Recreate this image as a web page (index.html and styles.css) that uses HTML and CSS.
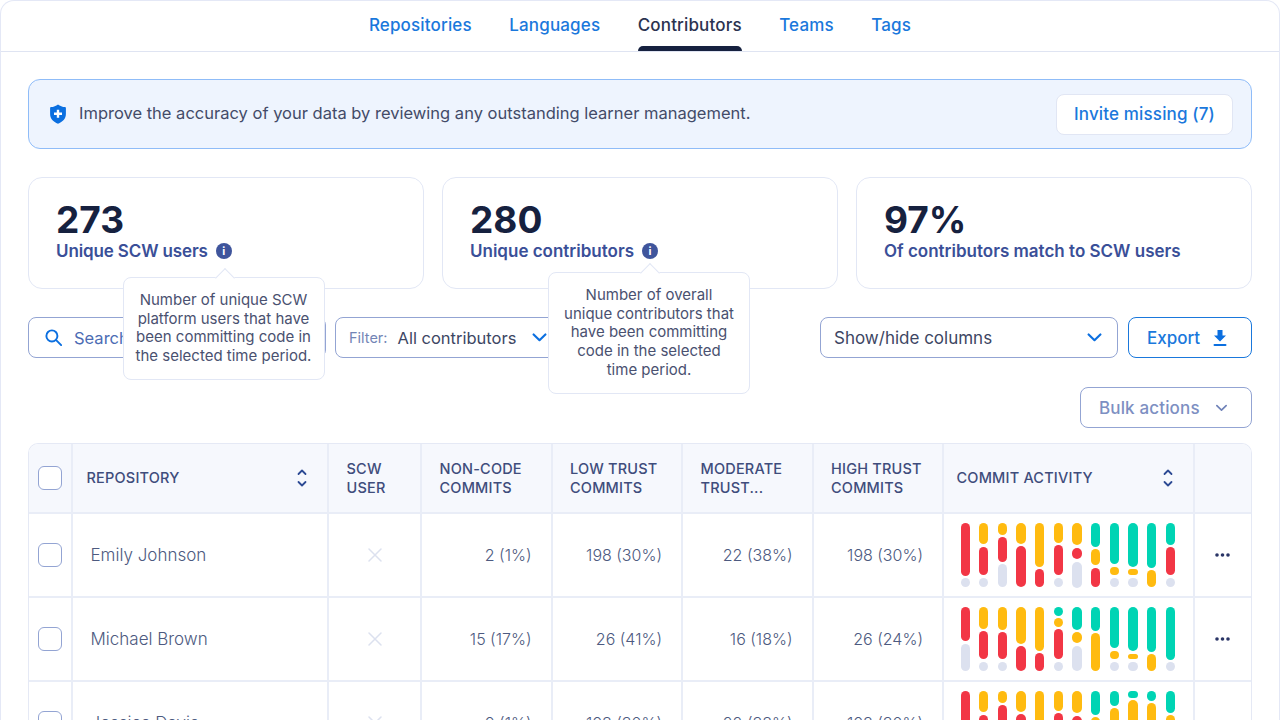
FILE: index.html
```html
<!DOCTYPE html>
<html lang="en">
<head>
<meta charset="utf-8">
<title>Contributors</title>
<link rel="stylesheet" href="styles.css">
</head>
<body>
<div class="page">
  <nav class="tabs">
    <a class="tab">Repositories</a>
    <a class="tab">Languages</a>
    <a class="tab active">Contributors</a>
    <a class="tab">Teams</a>
    <a class="tab">Tags</a>
  </nav>
  <main class="content">
    <section class="banner">
      <svg class="shield" viewBox="0 0 16 20"><path fill="#0b6fe0" d="M8 .4C10 1.900 12.500 2.900 15 3.100c.5 0 .9.400.9.900v6c0 4.600-3.200 8-7.900 9.700C3.300 18 .1 14.600.1 10V4c0-.5.4-.9.9-.9C3.500 2.900 6 1.900 8 .4z"/><path fill="#fff" d="M6.800 5.800h2.400v2.800H12V11H9.200v2.800H6.800V11H4V8.600h2.800z"/></svg>
      <p class="banner-text">Improve the accuracy of your data by reviewing any outstanding learner management.</p>
      <button class="invite">Invite missing (7)</button>
    </section>

    <section class="stats">
      <div class="stat">
        <div class="stat-num">273</div>
        <div class="stat-label">Unique SCW users <span class="info">i</span></div>
        <div class="tip tip-a">Number of unique SCW<br>platform users that have<br>been committing code in<br>the selected time period.</div>
      </div>
      <div class="stat">
        <div class="stat-num">280</div>
        <div class="stat-label">Unique contributors <span class="info">i</span></div>
        <div class="tip tip-b">Number of overall<br>unique contributors that<br>have been committing<br>code in the selected<br>time period.</div>
      </div>
      <div class="stat">
        <div class="stat-num">97%</div>
        <div class="stat-label">Of contributors match to SCW users</div>
      </div>
    </section>

    <section class="toolbar">
      <div class="field search">
        <svg class="ico-search" viewBox="0 0 16 16"><circle cx="6.500" cy="6.500" r="5.200" fill="none" stroke="#0b6fe0" stroke-width="1.800"/><path d="M10.500 10.500 15.200 15.200" stroke="#0b6fe0" stroke-width="1.800" stroke-linecap="round"/></svg>
        <span class="placeholder">Search</span>
      </div>
      <div class="field filter">
        <span class="filter-key">Filter:</span>
        <span class="filter-val">All contributors</span>
        <svg class="chev" viewBox="0 0 14 8"><path d="M1.500 1.200 7 6.500 12.500 1.200" fill="none" stroke="#0b6fe0" stroke-width="2" stroke-linecap="round" stroke-linejoin="round"/></svg>
      </div>
      <div class="spacer"></div>
      <div class="field columns">
        <span class="columns-text">Show/hide columns</span>
        <svg class="chev" viewBox="0 0 14 8"><path d="M1.500 1.200 7 6.500 12.500 1.200" fill="none" stroke="#0b6fe0" stroke-width="2" stroke-linecap="round" stroke-linejoin="round"/></svg>
      </div>
      <button class="export">Export
        <svg class="ico-dl" viewBox="0 0 14 16"><path fill="#0b6fe0" d="M4.500 0h5v5.500H13L7 11.500 1 5.500h3.500z"/><rect x="0.500" y="14" width="13" height="2" rx="1" fill="#0b6fe0"/></svg>
      </button>
    </section>

    <div class="bulk-row">
      <button class="bulk">Bulk actions
        <svg class="chev-sm" viewBox="0 0 14 8"><path d="M2 1.500 7 6.300 12 1.500" fill="none" stroke="#6f82b8" stroke-width="1.800" stroke-linecap="round" stroke-linejoin="round"/></svg>
      </button>
    </div>

    <div class="table-wrap">
      <table class="grid">
        <colgroup>
          <col class="c-check"><col class="c-repo"><col class="c-user"><col class="c-num"><col class="c-num"><col class="c-num"><col class="c-num"><col class="c-act"><col class="c-more">
        </colgroup>
        <thead>
          <tr>
            <th class="check-cell"><span class="box"></span></th>
            <th><div class="th-sort"><span>Repository</span><svg class="sort" viewBox="0 0 10 18"><path d="M1.500 5 5 1.500 8.500 5M1.500 13 5 16.500 8.500 13" fill="none" stroke="#2d4a94" stroke-width="1.800" stroke-linecap="round" stroke-linejoin="round"/></svg></div></th>
            <th>SCW<br>user</th>
            <th>Non-code<br>commits</th>
            <th>Low trust<br>commits</th>
            <th>Moderate<br>trust...</th>
            <th>High trust<br>commits</th>
            <th><div class="th-sort"><span>Commit activity</span><svg class="sort" viewBox="0 0 10 18"><path d="M1.500 5 5 1.500 8.500 5M1.500 13 5 16.500 8.500 13" fill="none" stroke="#2d4a94" stroke-width="1.800" stroke-linecap="round" stroke-linejoin="round"/></svg></div></th>
            <th class="last"></th>
          </tr>
        </thead>
        <tbody id="rows"></tbody>
      </table>
    </div>
  </main>
</div>
<script src="app.js"></script>
</body>
</html>
```
FILE: styles.css
```css
* { box-sizing: border-box; }
html, body { margin: 0; padding: 0; height: 100%; overflow: hidden; background: #fff; }
body { font-family: Inter, "Liberation Sans", sans-serif; color: #3d4663; }
button { font-family: inherit; cursor: pointer; }
p { margin: 0; }

.page { width: 1280px; height: 720px; border: 1.500px solid #e4e8f6; border-bottom: 0; border-radius: 14px 14px 0 0; overflow: hidden; }

.tabs { height: 51px; display: flex; justify-content: center; align-items: flex-start; gap: 37.500px; border-bottom: 1px solid #dfe4f2; }
.tab { position: relative; height: 50px; padding-top: 13px; font-size: 17px; letter-spacing: 0.150px; font-weight: 500; line-height: 22px; color: #1a78dc; }
.tab.active { color: #2b3350; }
.tab.active::after { content: ""; position: absolute; left: 0; right: 0; bottom: 0; height: 5px; background: #16213f; border-radius: 5px 5px 0 0; }

.content { padding: 27px 27px 0; }

.banner { height: 70px; display: flex; align-items: center; padding: 0 18px 0 21px; background: #eef4fe; border: 1px solid #8fbcf8; border-radius: 12px; }
.shield { width: 16px; height: 20px; flex: none; margin-right: 13px; }
.banner-text { flex: 1; font-size: 16.500px; margin-top: -2px; color: #434b68; }
.invite { width: 177px; height: 41px; background: #fff; border: 1px solid #e1e6f4; border-radius: 8px; font-size: 17px; letter-spacing: 0.150px; font-weight: 500; color: #1a78dc; }

.stats { display: flex; gap: 18px; margin-top: 28px; }
.stat { position: relative; flex: 1; height: 111.500px; padding: 23px 27px 0; border: 1px solid #e2e7f5; border-radius: 14px; }
.stat-num { font-size: 37px; line-height: 38px; font-weight: 700; color: #16213f; }
.stat-label { display: flex; align-items: center; gap: 8px; height: 24px; font-size: 17px; font-weight: 600; color: #3a4f98; }
.stat:first-child .stat-label { letter-spacing: -0.130px; }
.info { width: 16px; height: 16px; border-radius: 50%; background: #3f559c; color: #fff; font-size: 11px; font-weight: 700; line-height: 16px; text-align: center; }

.tip { position: absolute; z-index: 3; width: 202px; background: #fff; border: 1px solid #e2e7f5; border-radius: 8px; padding: 13px 0; font-size: 15px; line-height: 18.700px; text-align: center; color: #4a5170; }
.tip::before { content: ""; position: absolute; top: -7px; left: 94px; width: 13px; height: 13px; background: #fff; border-left: 1px solid #e2e7f5; border-top: 1px solid #e2e7f5; transform: rotate(45deg); }
.tip-a { left: 93.500px; top: 99px; }
.tip-b { left: 105px; top: 94px; }

.toolbar { display: flex; align-items: stretch; margin-top: 28.500px; height: 41px; }
.field { display: flex; align-items: center; background: #fff; border: 1.500px solid #93a4d3; border-radius: 8px; }
.search { width: 298px; padding-left: 16px; }
.ico-search { width: 17px; height: 17px; flex: none; }
.placeholder { margin-left: 12px; font-size: 16.500px; color: #4c6cb4; }
.filter { width: 227px; margin-left: 9px; padding-left: 13px; }
.filter-key { font-size: 14.500px; color: #7385b6; margin-right: 10px; }
.filter-val { font-size: 16.500px; color: #3d4663; }
.chev { width: 15px; height: 9px; margin-left: 16px; flex: none; }
.spacer { flex: 1; }
.columns { width: 298px; padding: 0 15px 0 13px; justify-content: space-between; }
.columns-text { font-size: 17px; color: #3d4663; }
.export { display: flex; align-items: center; gap: 13px; width: 124px; margin-left: 10px; padding: 0 0 0 18px; background: #fff; border: 1.500px solid #1a78dc; border-radius: 8px; font-size: 17px; font-weight: 500; color: #1a78dc; }
.ico-dl { width: 14px; height: 16px; }

.bulk-row { display: flex; justify-content: flex-end; margin-top: 29px; }
.bulk { display: flex; align-items: center; justify-content: space-between; width: 172px; height: 41px; padding: 0 23px 0 18px; background: #fff; border: 1.500px solid #93a4d3; border-radius: 8px; font-size: 17px; letter-spacing: 0.150px; font-weight: 500; color: #7d8fc2; }
.chev-sm { width: 13px; height: 8px; }

.table-wrap { margin-top: 15px; border: 1.500px solid #e5e9f5; border-bottom: 0; border-radius: 10px 10px 0 0; overflow: hidden; }
.grid { width: 100%; border-collapse: separate; border-spacing: 0; table-layout: fixed; }
.c-check { width: 44px; }
.c-repo { width: 256px; }
.c-user { width: 93px; }
.c-num { width: 130.500px; }
.c-act { width: 251px; }
.c-more { width: auto; }
.grid th, .grid td { border-right: 2px solid #e9edf7; border-bottom: 2px solid #e9edf7; padding: 0; }
.grid th:last-child, .grid td:last-child { border-right: 0; }
.grid th { height: 70px; padding-left: 17.500px; background: #f6f8fd; font-size: 14.500px; font-weight: 500; line-height: 19px; text-align: left; text-transform: uppercase; letter-spacing: 0.200px; color: #3f4d7c; }
.grid th.check-cell, .grid td.check-cell { padding: 0; text-align: center; }
.grid td { height: 84px; }
.box { display: inline-block; vertical-align: middle; width: 24px; height: 24px; background: #fff; border: 1.500px solid #93a4d3; border-radius: 6px; }
.th-sort { display: flex; align-items: center; justify-content: space-between; margin-top: -1px; padding-right: 20px; }
.grid th:nth-child(2) { padding-left: 13.500px; }
.grid th:nth-child(8) { padding-left: 12.500px; }
.sort { width: 10px; height: 18px; }
.grid td.name { padding-left: 17.500px; font-size: 17px; font-weight: 300; color: #4d5a80; }
.cross { text-align: center; }
.cross svg { display: block; margin: 0 auto; width: 14px; height: 14px; }
.grid td.num { padding-right: 19px; text-align: right; font-size: 16px; font-weight: 300; color: #4d5a80; }
.grid td.activity { padding-left: 16.500px; }
.bars { display: flex; gap: 9.330px; height: 65px; }
.bar { width: 9.330px; display: flex; flex-direction: column; gap: 2.670px; }
.seg { display: block; border-radius: 5px; }
.r { background: #f23645; }
.y { background: #ffbb10; }
.g { background: #00d4b4; }
.n { background: #dce1ef; }
.grid td.more { padding-right: 2px; }
.more svg { display: block; margin: 0 auto; width: 15px; height: 4px; }
```
FILE: app.js
```js
var rows = [
  { name: "Emily Johnson", nums: ["2 (1%)", "198 (30%)", "22 (38%)", "198 (30%)"], bars: [
    "r159 n28", "y65 r86 n28", "y37 r73 n69", "y64 r123", "y133 r54", "y60 r91 n28", "y68 r36 n77",
    "g72 y48 r59", "g125 y26 n28", "g133 y18 n28", "g135 y52", "g67 r84 n28"] },
  { name: "Michael Brown", nums: ["15 (17%)", "26 (41%)", "16 (18%)", "26 (24%)"], bars: [
    "r104 n83", "y66 r85 n28", "y69 r82 n28", "y111 r76", "y133 r54", "g27 y26 r90 n28", "g69 y34 n76",
    "g73 y114", "g125 y26 n28", "g134 y17 n28", "g135 y52", "g159 n28"] },
  { name: "Jessica Davis", nums: ["9 (1%)", "198 (30%)", "22 (38%)", "198 (30%)"], bars: [
    "r159 n28", "y65 r86 n28", "y37 r73 n69", "y64 r123", "y133 r54", "y60 r91 n28", "y68 r36 n77",
    "g72 y48 r59", "g45 y134", "g22 y157", "g30 y149", "g67 y112"] }
];
var html = "";
rows.forEach(function (row) {
  html += '<tr><td class="check-cell"><span class="box"></span></td>';
  html += '<td class="name">' + row.name + '</td>';
  html += '<td class="cross"><svg viewBox="0 0 14 14"><path d="M1 1 13 13M13 1 1 13" stroke="#dce1ef" stroke-width="1.500" stroke-linecap="round"/></svg></td>';
  row.nums.forEach(function (n) { html += '<td class="num">' + n + '</td>'; });
  html += '<td class="activity"><div class="bars">';
  row.bars.forEach(function (b) {
    html += '<div class="bar">';
    b.split(" ").forEach(function (s) {
      var h = (parseInt(s.slice(1), 10) / 3).toFixed(2);
      html += '<span class="seg ' + s.charAt(0) + '" style="height:' + h + 'px"></span>';
    });
    html += '</div>';
  });
  html += '</div></td>';
  html += '<td class="more"><svg viewBox="0 0 15 4"><circle cx="2" cy="2" r="1.800" fill="#2a3566"/><circle cx="7.500" cy="2" r="1.800" fill="#2a3566"/><circle cx="13" cy="2" r="1.800" fill="#2a3566"/></svg></td></tr>';
});
document.getElementById("rows").innerHTML = html;
```
